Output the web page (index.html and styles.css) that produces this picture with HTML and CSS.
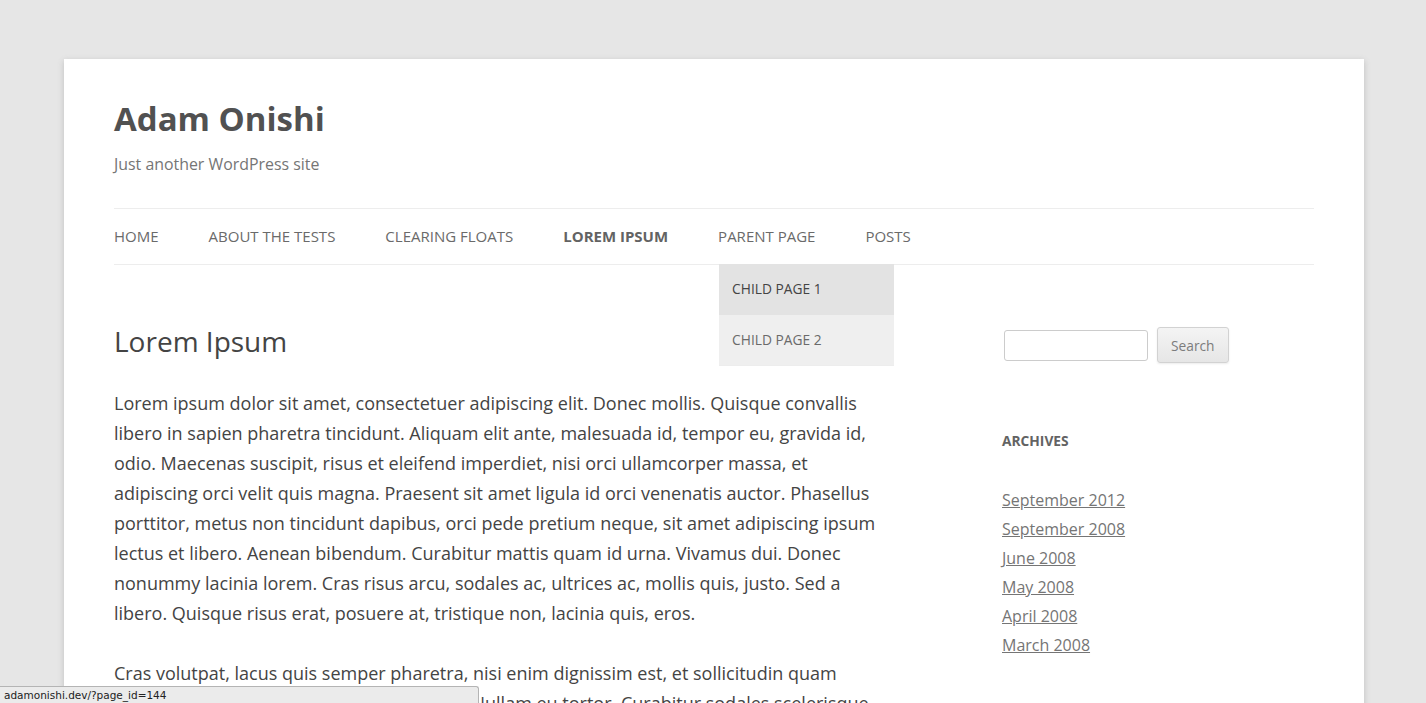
FILE: index.html
```html
<!DOCTYPE html>
<html lang="en">
<head>
<meta charset="utf-8">
<title>Lorem Ipsum | Adam Onishi</title>
<link rel="stylesheet" href="styles.css">
</head>
<body>
<div class="site">
  <header class="site-header">
    <h1 class="site-title"><a href="#">Adam Onishi</a></h1>
    <h2 class="site-description">Just another WordPress site</h2>
    <nav class="main-navigation">
      <ul class="nav-menu">
        <li><a href="#">Home</a></li>
        <li><a href="#">About The Tests</a></li>
        <li><a href="#">Clearing Floats</a></li>
        <li class="current"><a href="#">Lorem Ipsum</a></li>
        <li class="has-sub"><a href="#">Parent Page</a>
          <ul class="sub-menu">
            <li class="hover"><a href="#">Child Page 1</a></li>
            <li><a href="#">Child Page 2</a></li>
          </ul>
        </li>
        <li><a href="#">Posts</a></li>
      </ul>
    </nav>
  </header>
  <div class="main">
    <div class="site-content">
      <article>
        <h1 class="entry-title">Lorem Ipsum</h1>
        <div class="entry-content">
          <p>Lorem ipsum dolor sit amet, consectetuer adipiscing elit. Donec mollis. Quisque convallis libero in sapien pharetra tincidunt. Aliquam elit ante, malesuada id, tempor eu, gravida id, odio. Maecenas suscipit, risus et eleifend imperdiet, nisi orci ullamcorper massa, et adipiscing orci velit quis magna. Praesent sit amet ligula id orci venenatis auctor. Phasellus porttitor, metus non tincidunt dapibus, orci pede pretium neque, sit amet adipiscing ipsum lectus et libero. Aenean bibendum. Curabitur mattis quam id urna. Vivamus dui. Donec nonummy lacinia lorem. Cras risus arcu, sodales ac, ultrices ac, mollis quis, justo. Sed a libero. Quisque risus erat, posuere at, tristique non, lacinia quis, eros.</p>
          <p>Cras volutpat, lacus quis semper pharetra, nisi enim dignissim est, et sollicitudin quam ipsum vel mi. Sed commodo urna ac urna. Nullam eu tortor. Curabitur sodales scelerisque magna. Donec ultricies tristique pede. Nullam libero. Nam sollicitudin felis vel metus. Nullam posuere molestie metus. Nullam molestie, nunc id suscipit rhoncus, felis mi vulputate lacus, a ultrices tortor dolor eget augue.</p>
        </div>
      </article>
    </div>
    <aside class="widget-area">
      <div class="widget widget-search">
        <form class="search-form">
          <input class="search-input" type="text" aria-label="Search for">
          <button class="search-submit" type="button">Search</button>
        </form>
      </div>
      <div class="widget">
        <h3 class="widget-title">Archives</h3>
        <ul class="archive-list">
          <li><a href="#">September 2012</a></li>
          <li><a href="#">September 2008</a></li>
          <li><a href="#">June 2008</a></li>
          <li><a href="#">May 2008</a></li>
          <li><a href="#">April 2008</a></li>
          <li><a href="#">March 2008</a></li>
        </ul>
      </div>
    </aside>
  </div>
</div>
<div class="status-bar">adamonishi.dev/?page_id=144</div>
</body>
</html>
```
FILE: styles.css
```css
html, body {
  margin: 0;
  padding: 0;
}
body {
  background: #e6e6e6;
  font-family: "Open Sans", "Liberation Sans", sans-serif;
  color: #444;
  font-size: 18px;
  line-height: 30px;
  padding-left: 2px;
}
a { color: inherit; }
.site {
  max-width: 1200px;
  margin: 59px auto 60px;
  padding: 0 50px;
  background: #fff;
  box-shadow: 0 2px 6px rgba(100, 100, 100, 0.3);
}
.site-header {
  padding: 30px 0;
}
.site-title {
  margin: 0;
  font-size: 33px;
  line-height: 60px;
  font-weight: 700;
}
.site-title a {
  color: #515151;
  text-decoration: none;
}
.site-description {
  margin: 0;
  font-size: 15.9px;
  line-height: 30px;
  font-weight: 400;
  color: #757575;
}
.main-navigation {
  margin-top: 29px;
}
.nav-menu {
  list-style: none;
  margin: 0;
  padding: 0;
  display: flex;
  border-top: 1px solid #ededed;
  border-bottom: 1px solid #ededed;
}
.nav-menu > li {
  position: relative;
  margin-right: 50px;
}
.nav-menu > li > a {
  display: block;
  font-size: 15px;
  line-height: 55px;
  color: #6a6a6a;
  text-decoration: none;
  text-transform: uppercase;
  white-space: nowrap;
}
.nav-menu > li.current > a {
  color: #636363;
  font-weight: 700;
}
.sub-menu {
  list-style: none;
  margin: 0;
  padding: 0;
  position: absolute;
  top: 100%;
  left: 1px;
  z-index: 2;
  width: 175px;
}
.sub-menu li a {
  display: block;
  background: #efefef;
  border-bottom: 1px solid #ededed;
  padding: 9px 13px 10px;
  font-size: 13.75px;
  line-height: 31px;
  color: #6a6a6a;
  text-decoration: none;
  text-transform: uppercase;
}
.sub-menu li.hover a {
  background: #e3e3e3;
  border-bottom-color: #e3e3e3;
  color: #444;
}
.main {
  display: flex;
  justify-content: space-between;
  align-items: flex-start;
  padding-bottom: 60px;
}
.site-content {
  width: 770px;
  margin-top: 30px;
}
.entry-title {
  margin: 0 0 30px;
  font-size: 28px;
  line-height: 33px;
  font-weight: 400;
  color: #444;
}
.entry-content p {
  margin: 0 0 30px;
}
.widget-area {
  width: 312px;
  margin-top: 31px;
}
.widget {
  margin-bottom: 60px;
}
.search-form {
  display: flex;
  align-items: center;
  padding: 1px 0 3px;
}
.search-input {
  margin: 0 0 0 2px;
  width: 144px;
  height: 31px;
  box-sizing: border-box;
  border: 1px solid #ccc;
  border-radius: 3px;
  padding: 6px;
  font-family: inherit;
  font-size: 15px;
}
.search-submit {
  margin-left: 9px;
  height: 36px;
  box-sizing: border-box;
  padding: 0 13px;
  font-family: inherit;
  font-size: 13.75px;
  color: #7c7c7c;
  background: linear-gradient(#f4f4f4, #e6e6e6);
  border: 1px solid #d2d2d2;
  border-radius: 3px;
  box-shadow: 0 1px 2px rgba(64, 64, 64, 0.1);
}
.widget-title {
  margin: 0 0 30px;
  font-size: 13.75px;
  line-height: 30px;
  font-weight: 700;
  text-transform: uppercase;
  color: #636363;
}
.archive-list {
  list-style: none;
  margin: 0;
  padding: 0;
}
.archive-list li {
  font-size: 16px;
  line-height: 29px;
}
.archive-list a {
  color: #757575;
  text-decoration: underline;
}
.status-bar {
  position: fixed;
  left: 0;
  bottom: 0;
  width: 474px;
  height: 16px;
  background: #ebebeb;
  border: 1px solid #b4b4b4;
  border-left: 0;
  border-bottom: 0;
  border-top-right-radius: 3px;
  padding-left: 4px;
  font-family: "DejaVu Sans", "Liberation Sans", sans-serif;
  font-size: 10.5px;
  line-height: 16px;
  color: #222;
}
```
